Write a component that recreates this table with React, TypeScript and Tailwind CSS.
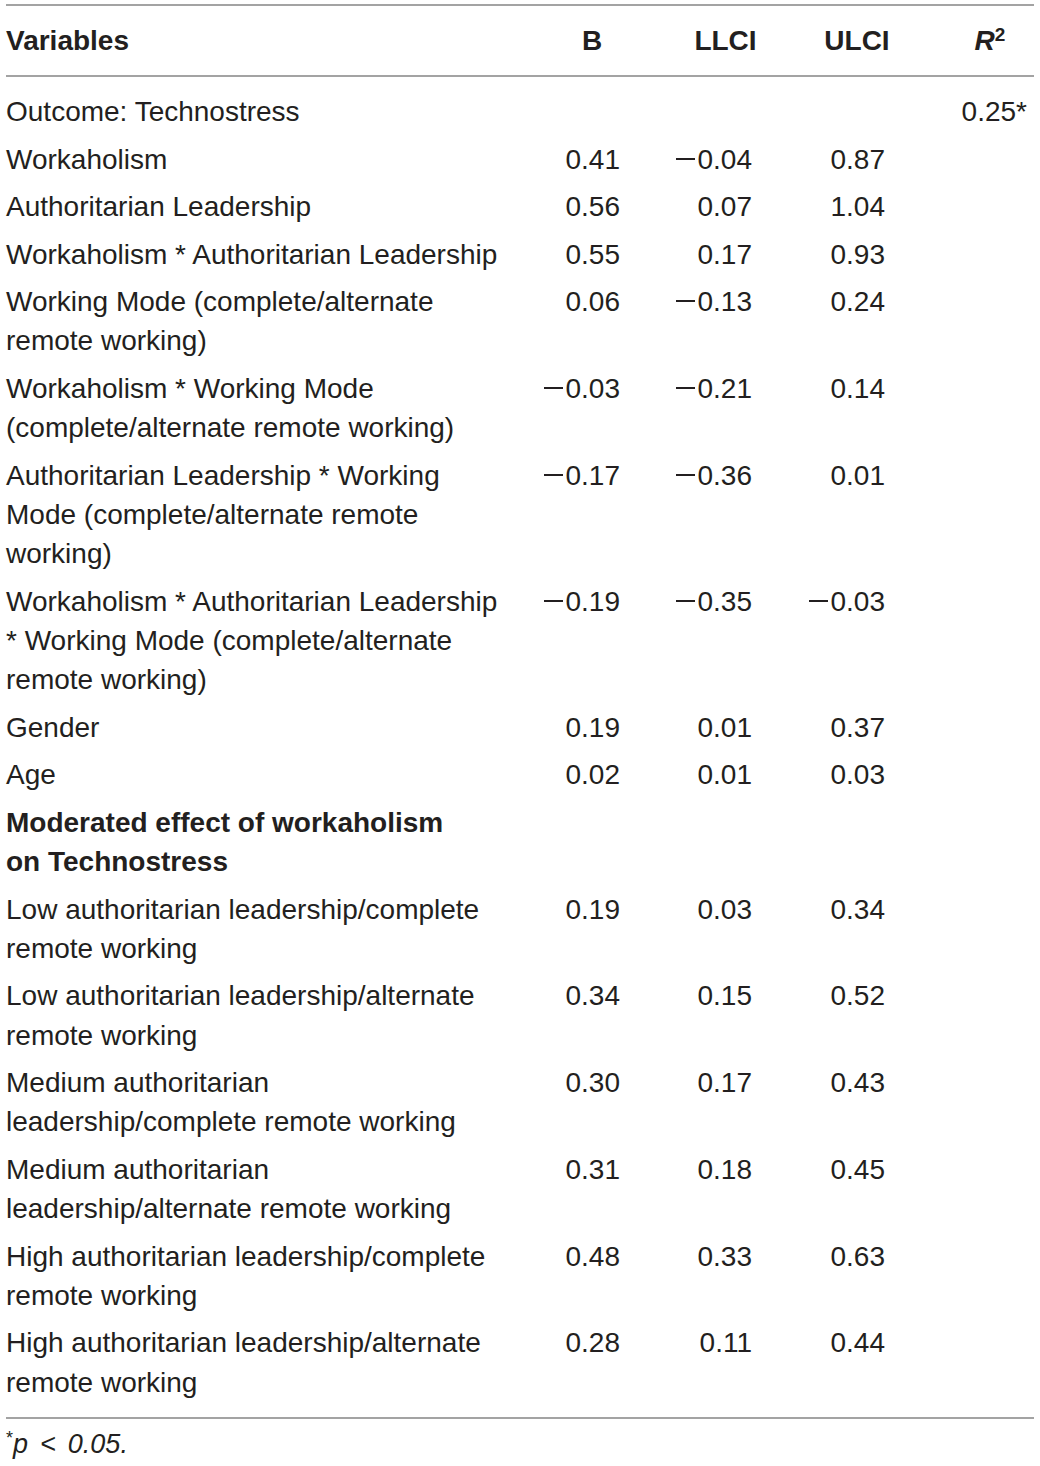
import React from 'react';

type Row = {
  label: string;
  b?: string;
  ll?: string;
  ul?: string;
  r2?: string;
  bold?: boolean;
};

const rows: Row[] = [
  { label: 'Outcome: Technostress', r2: '0.25*' },
  { label: 'Workaholism', b: '0.41', ll: '-0.04', ul: '0.87' },
  { label: 'Authoritarian Leadership', b: '0.56', ll: '0.07', ul: '1.04' },
  { label: 'Workaholism * Authoritarian Leadership', b: '0.55', ll: '0.17', ul: '0.93' },
  { label: 'Working Mode (complete/alternate remote working)', b: '0.06', ll: '-0.13', ul: '0.24' },
  { label: 'Workaholism * Working Mode (complete/alternate remote working)', b: '-0.03', ll: '-0.21', ul: '0.14' },
  { label: 'Authoritarian Leadership * Working Mode (complete/alternate remote working)', b: '-0.17', ll: '-0.36', ul: '0.01' },
  { label: 'Workaholism * Authoritarian Leadership * Working Mode (complete/alternate remote working)', b: '-0.19', ll: '-0.35', ul: '-0.03' },
  { label: 'Gender', b: '0.19', ll: '0.01', ul: '0.37' },
  { label: 'Age', b: '0.02', ll: '0.01', ul: '0.03' },
  { label: 'Moderated effect of workaholism on Technostress', bold: true },
  { label: 'Low authoritarian leadership/complete remote working', b: '0.19', ll: '0.03', ul: '0.34' },
  { label: 'Low authoritarian leadership/alternate remote working', b: '0.34', ll: '0.15', ul: '0.52' },
  { label: 'Medium authoritarian leadership/complete remote working', b: '0.30', ll: '0.17', ul: '0.43' },
  { label: 'Medium authoritarian leadership/alternate remote working', b: '0.31', ll: '0.18', ul: '0.45' },
  { label: 'High authoritarian leadership/complete remote working', b: '0.48', ll: '0.33', ul: '0.63' },
  { label: 'High authoritarian leadership/alternate remote working', b: '0.28', ll: '0.11', ul: '0.44' },
];

// column boxes: label | B | LLCI | ULCI | R2
const colLabel = 'w-[505px] shrink-0';
const colB = 'ml-[29px] w-[104px] shrink-0';
const colLL = 'ml-[31px] w-[101px] shrink-0';
const colUL = 'ml-[30px] w-[102px] shrink-0';
const colR2 = 'ml-[38px] w-[88px] shrink-0';

// negative values: long minus bar like the print table
const Num = ({ v }: { v?: string }) => {
  if (!v) return null;
  if (v.startsWith('-')) {
    return (
      <>
        <span aria-label="minus" className="mr-[3px] inline-block h-[2px] w-[19px] bg-current align-[9px]" />
        {v.slice(1)}
      </>
    );
  }
  return <>{v}</>;
};

export default function App() {
  return (
    <div
      className="min-h-[1466px] w-[1040px] bg-white pt-[4px] text-[#231f20]"
      style={{ fontFamily: '"Liberation Sans", Arial, Helvetica, sans-serif' }}
    >
      <div className="ml-[6px] w-[1028px]">
        {/* header */}
        <div className="flex h-[73px] items-center border-y-2 border-[#a3a3a3] text-[28px] font-bold leading-[39px]">
          <div className={colLabel}>Variables</div>
          <div className={`${colB} text-center`}>B</div>
          <div className={`${colLL} text-center`}>LLCI</div>
          <div className={`${colUL} text-center`}>ULCI</div>
          <div className={`${colR2} text-center`}>
            <i>R</i>
            <sup className="text-[19px]">2</sup>
          </div>
        </div>

        {/* body */}
        <div className="border-b-2 border-[#a3a3a3] pt-[11px] pb-[11px] text-[28px] leading-[39.3px]">
          {rows.map((r, i) => (
            <div key={i} className="flex py-[4.1px]">
              <div className={colLabel}>
                {r.bold ? <div className="w-[462px] font-bold">{r.label}</div> : r.label}
              </div>
              <div className={`${colB} pr-[24px] text-right`}><Num v={r.b} /></div>
              <div className={`${colLL} pr-[24px] text-right`}><Num v={r.ll} /></div>
              <div className={`${colUL} pr-[23px] text-right`}><Num v={r.ul} /></div>
              <div className={`${colR2} pr-[7px] text-right`}>{r.r2}</div>
            </div>
          ))}
        </div>

        {/* footnote */}
        <div className="pt-[7px] text-[27px] italic leading-[36px]">
          <sup className="not-italic text-[18px]">*</sup>p<span className="mx-[12px]">&lt;</span>0.05.
        </div>
      </div>
    </div>
  );
}
